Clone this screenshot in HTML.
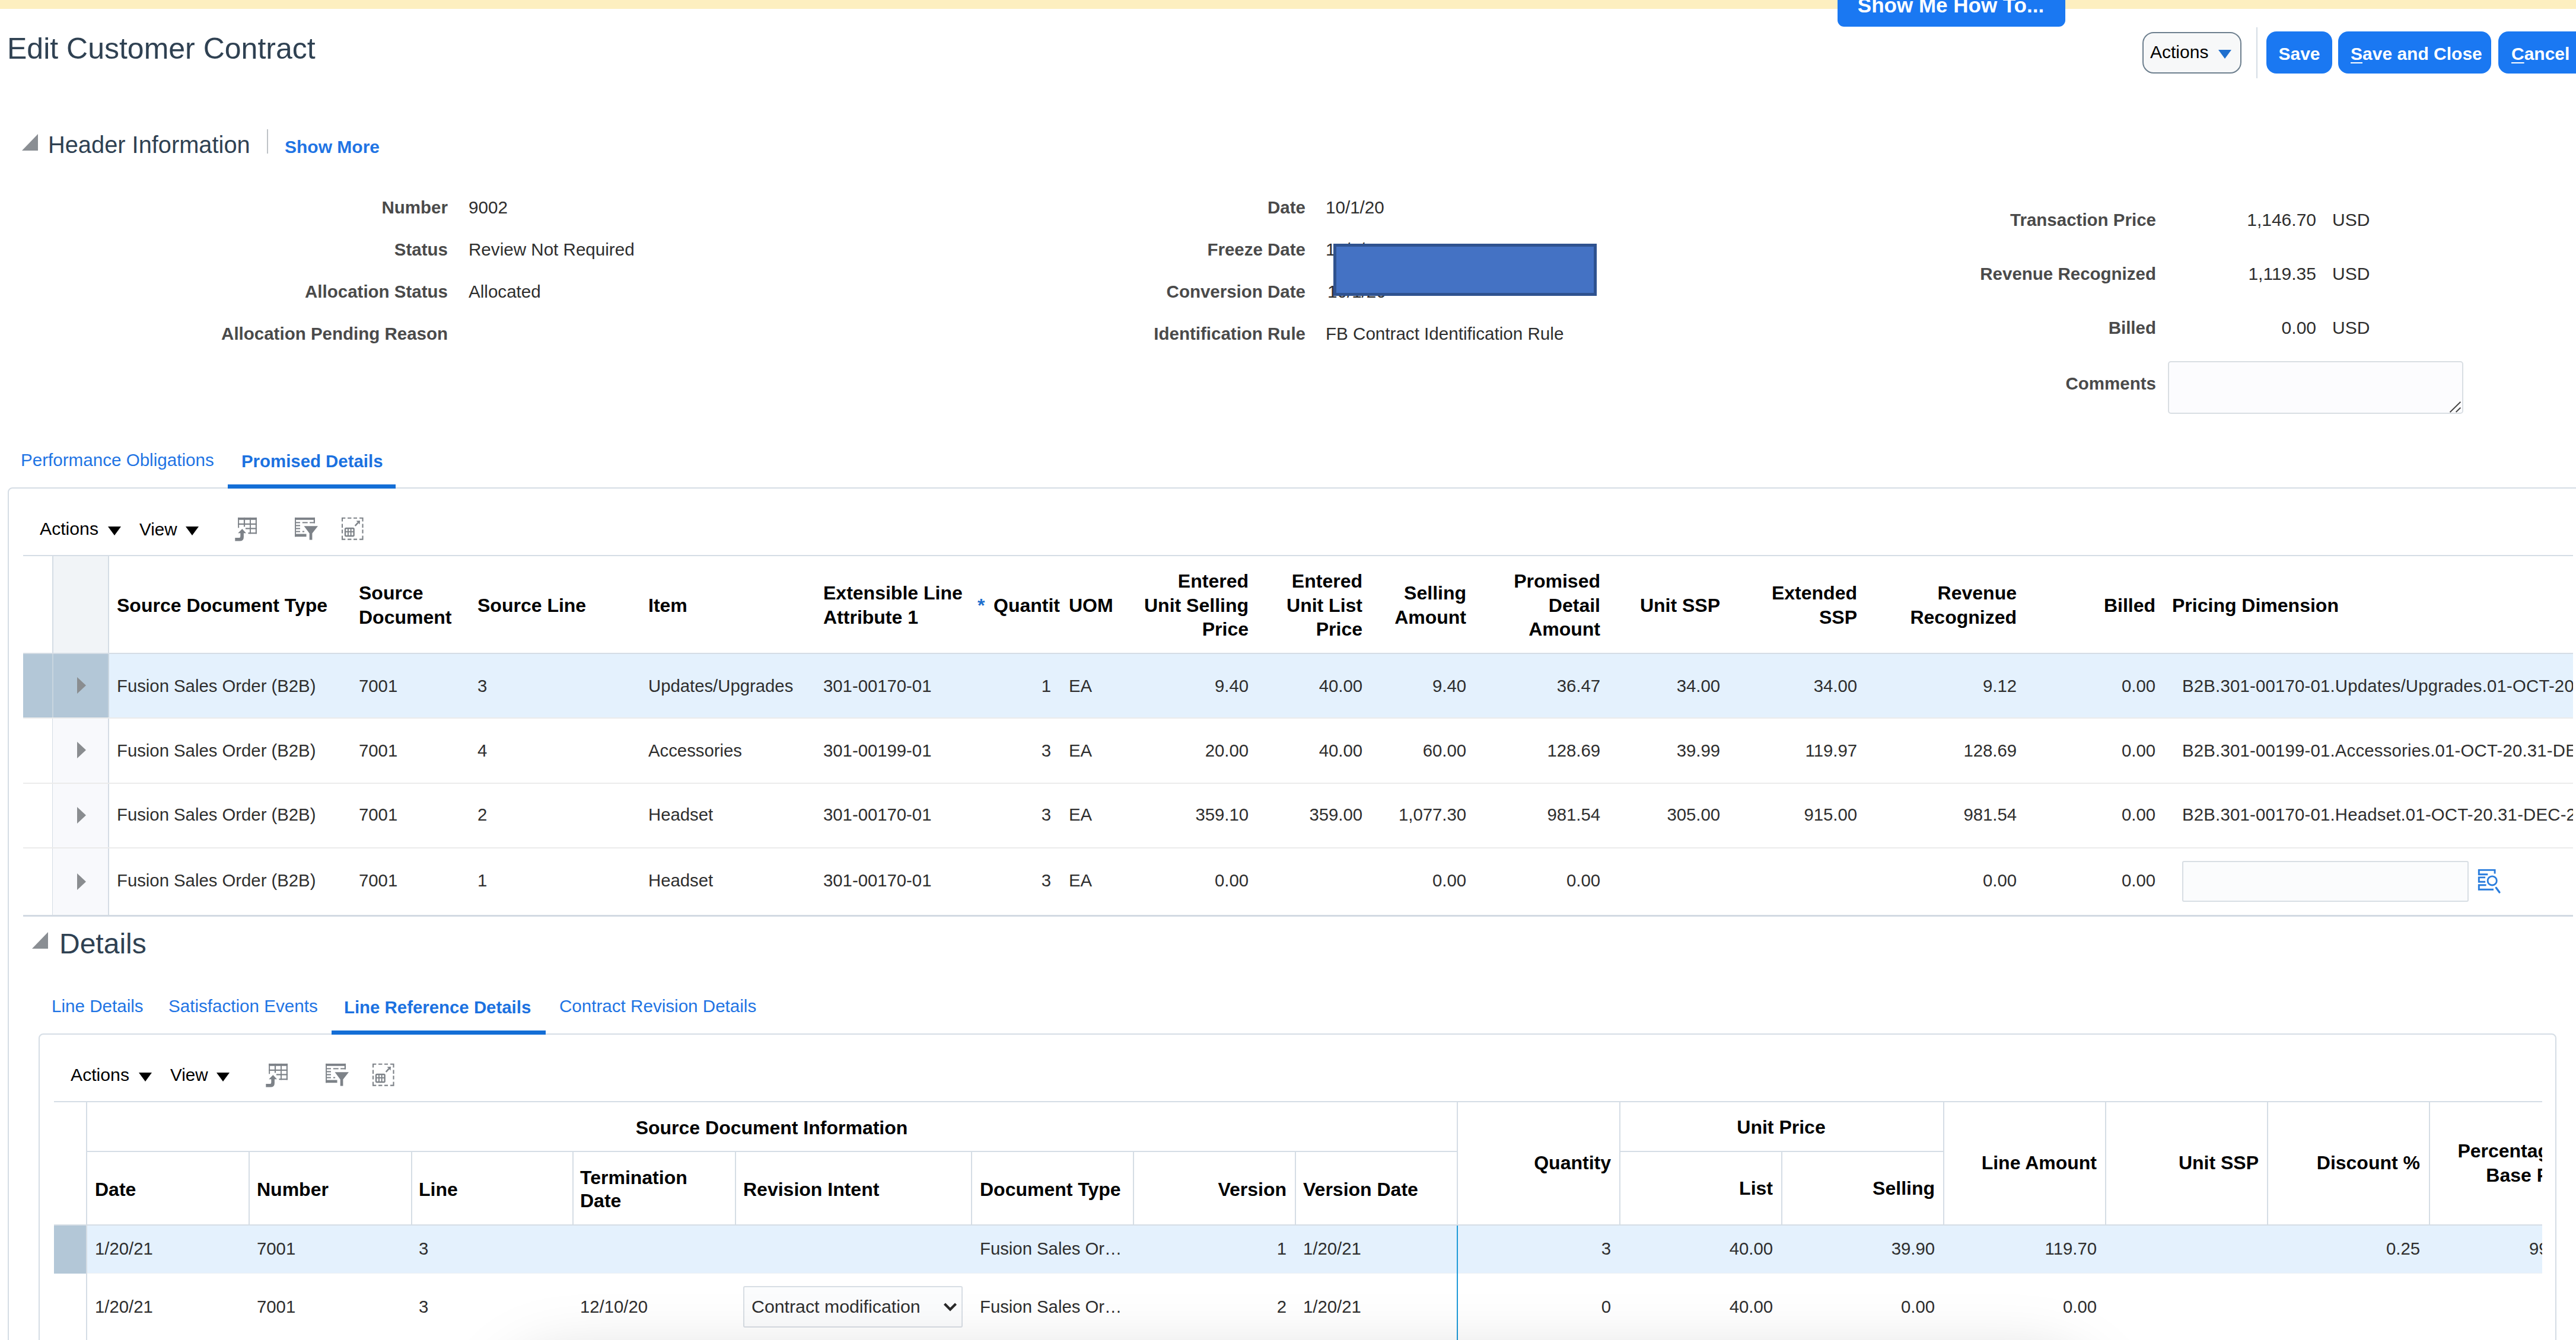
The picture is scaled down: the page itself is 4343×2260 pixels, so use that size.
<!DOCTYPE html>
<html><head><meta charset="utf-8"><title>Edit Customer Contract</title>
<style>
html,body{margin:0;padding:0;width:4343px;height:2260px;overflow:hidden;background:#fff;}
body{font-family:"Liberation Sans",sans-serif;}
#root{position:relative;width:4343px;height:2260px;overflow:hidden;background:#fff;}
.t{position:absolute;white-space:nowrap;}
.b{position:absolute;box-sizing:border-box;}
svg.b{overflow:visible;}
u{text-decoration:underline;text-decoration-thickness:2px;text-underline-offset:4px;}
</style></head><body><div id="root">
<div class="b" style="left:0px;top:0px;width:4343px;height:15px;background:#fdefc0;"></div><div class="b" style="left:3098px;top:-40px;width:384px;height:85px;background:#1a78f2;border-radius:11px;"></div><div class="t" style="top:-8.63px;font-size:35px;font-weight:700;color:#fff;line-height:35px;left:1289px;width:4000px;text-align:center;">Show Me How To...</div><div class="t" style="top:56.66px;font-size:50px;font-weight:400;color:#2f4152;line-height:50px;left:12px;">Edit Customer Contract</div><div class="b" style="left:3612px;top:54px;width:167px;height:70px;border:2px solid #6d7f8e;border-radius:19px;background:#f7f8f9;"></div><div class="t" style="top:73.30px;font-size:30px;font-weight:400;color:#000;line-height:30px;left:3625px;">Actions</div><svg class="b" style="left:3740px;top:84px" width="23" height="16"><path d="M0 0 L22 0 L11 15 Z" fill="#1f6fce"/></svg><div class="b" style="left:3804px;top:46px;width:2px;height:86px;background:#d5dde5;"></div><div class="b" style="left:3821px;top:53px;width:111px;height:71px;background:#1a78f2;border-radius:17px;"></div><div class="t" style="top:76.40px;font-size:30px;font-weight:700;color:#fff;line-height:30px;left:1876.5px;width:4000px;text-align:center;">Save</div><div class="b" style="left:3942px;top:53px;width:258px;height:71px;background:#1a78f2;border-radius:17px;"></div><div class="t" style="top:76.40px;font-size:30px;font-weight:700;color:#fff;line-height:30px;left:3963px;"><u>S</u>ave and Close</div><div class="b" style="left:4212px;top:53px;width:200px;height:71px;background:#1a78f2;border-radius:17px;"></div><div class="t" style="top:76.40px;font-size:30px;font-weight:700;color:#fff;line-height:30px;left:4234px;"><u>C</u>ancel</div><svg class="b" style="left:37px;top:226px" width="28" height="29"><path d="M27 0 L27 28 L0 28 Z" fill="#8a8e93"/></svg><div class="t" style="top:224.80px;font-size:39.8px;font-weight:400;color:#2f4152;line-height:39.8px;left:81px;">Header Information</div><div class="b" style="left:450px;top:218px;width:2px;height:41px;background:#bfc3c7;"></div><div class="t" style="top:233.20px;font-size:30px;font-weight:700;color:#1f74e4;line-height:30px;left:480px;">Show More</div><div class="t" style="top:335.02px;font-size:29.5px;font-weight:700;color:#4a4a4a;line-height:29.5px;left:-3245px;width:4000px;text-align:right;">Number</div><div class="t" style="top:334.94px;font-size:29.6px;font-weight:400;color:#2e2e2e;line-height:29.6px;left:790px;">9002</div><div class="t" style="top:406.02px;font-size:29.5px;font-weight:700;color:#4a4a4a;line-height:29.5px;left:-3245px;width:4000px;text-align:right;">Status</div><div class="t" style="top:405.94px;font-size:29.6px;font-weight:400;color:#2e2e2e;line-height:29.6px;left:790px;">Review Not Required</div><div class="t" style="top:477.02px;font-size:29.5px;font-weight:700;color:#4a4a4a;line-height:29.5px;left:-3245px;width:4000px;text-align:right;">Allocation Status</div><div class="t" style="top:476.94px;font-size:29.6px;font-weight:400;color:#2e2e2e;line-height:29.6px;left:790px;">Allocated</div><div class="t" style="top:548.02px;font-size:29.5px;font-weight:700;color:#4a4a4a;line-height:29.5px;left:-3245px;width:4000px;text-align:right;">Allocation Pending Reason</div><div class="t" style="top:335.02px;font-size:29.5px;font-weight:700;color:#4a4a4a;line-height:29.5px;left:-1799px;width:4000px;text-align:right;">Date</div><div class="t" style="top:334.94px;font-size:29.6px;font-weight:400;color:#2e2e2e;line-height:29.6px;left:2235px;">10/1/20</div><div class="t" style="top:406.02px;font-size:29.5px;font-weight:700;color:#4a4a4a;line-height:29.5px;left:-1799px;width:4000px;text-align:right;">Freeze Date</div><div class="t" style="top:405.94px;font-size:29.6px;font-weight:400;color:#2e2e2e;line-height:29.6px;left:2235px;">10/1/20</div><div class="t" style="top:477.02px;font-size:29.5px;font-weight:700;color:#4a4a4a;line-height:29.5px;left:-1799px;width:4000px;text-align:right;">Conversion Date</div><div class="t" style="top:476.94px;font-size:29.6px;font-weight:400;color:#2e2e2e;line-height:29.6px;left:2238px;">10/1/20</div><div class="t" style="top:548.02px;font-size:29.5px;font-weight:700;color:#4a4a4a;line-height:29.5px;left:-1799px;width:4000px;text-align:right;">Identification Rule</div><div class="t" style="top:547.94px;font-size:29.6px;font-weight:400;color:#2e2e2e;line-height:29.6px;left:2235px;">FB Contract Identification Rule</div><div class="b" style="left:2248px;top:411px;width:444px;height:88px;background:#4472c4;border:5px solid #2f528f;"></div><div class="t" style="top:356.02px;font-size:29.5px;font-weight:700;color:#4a4a4a;line-height:29.5px;left:-365px;width:4000px;text-align:right;">Transaction Price</div><div class="t" style="top:355.60px;font-size:30px;font-weight:400;color:#2e2e2e;line-height:30px;left:-95px;width:4000px;text-align:right;">1,146.70</div><div class="t" style="top:355.60px;font-size:30px;font-weight:400;color:#2e2e2e;line-height:30px;left:3932px;">USD</div><div class="t" style="top:447.02px;font-size:29.5px;font-weight:700;color:#4a4a4a;line-height:29.5px;left:-365px;width:4000px;text-align:right;">Revenue Recognized</div><div class="t" style="top:446.60px;font-size:30px;font-weight:400;color:#2e2e2e;line-height:30px;left:-95px;width:4000px;text-align:right;">1,119.35</div><div class="t" style="top:446.60px;font-size:30px;font-weight:400;color:#2e2e2e;line-height:30px;left:3932px;">USD</div><div class="t" style="top:538.02px;font-size:29.5px;font-weight:700;color:#4a4a4a;line-height:29.5px;left:-365px;width:4000px;text-align:right;">Billed</div><div class="t" style="top:537.60px;font-size:30px;font-weight:400;color:#2e2e2e;line-height:30px;left:-95px;width:4000px;text-align:right;">0.00</div><div class="t" style="top:537.60px;font-size:30px;font-weight:400;color:#2e2e2e;line-height:30px;left:3932px;">USD</div><div class="t" style="top:632.02px;font-size:29.5px;font-weight:700;color:#4a4a4a;line-height:29.5px;left:-365px;width:4000px;text-align:right;">Comments</div><div class="b" style="left:3655px;top:609px;width:498px;height:89px;border:2px solid #d9dee3;border-radius:5px;background:#fcfcfe;"></div><svg class="b" style="left:4125px;top:672px" width="28" height="28"><path d="M5.5 23.3 L23.4 5.8 M15.6 23 L23.4 15.5" stroke="#444" stroke-width="1.9"/></svg><div class="t" style="top:760.64px;font-size:29.6px;font-weight:400;color:#1f74e4;line-height:29.6px;left:35px;">Performance Obligations</div><div class="t" style="top:763.11px;font-size:29.4px;font-weight:700;color:#1b71e0;line-height:29.4px;left:407px;">Promised Details</div><div class="b" style="left:13px;top:822px;width:4400px;height:1600px;border:2px solid #d5dde5;border-radius:8px;"></div><div class="b" style="left:384px;top:817px;width:283px;height:7px;background:#146ed6;"></div><div class="t" style="top:877.23px;font-size:30.2px;font-weight:400;color:#000;line-height:30.2px;left:67px;">Actions</div><svg class="b" style="left:182px;top:888px" width="23" height="16"><path d="M0 0 L22 0 L11 15 Z" fill="#000"/></svg><div class="t" style="top:877.74px;font-size:29.6px;font-weight:400;color:#000;line-height:29.6px;left:235px;">View</div><svg class="b" style="left:313px;top:888px" width="23" height="16"><path d="M0 0 L22 0 L11 15 Z" fill="#000"/></svg><svg class="b" style="left:390px;top:866px" width="50" height="50" viewBox="0 0 50 50">
<rect x="11.2" y="6.9" width="31.7" height="3.9" fill="#7d8288"/>
<rect x="11.2" y="6.9" width="1.9" height="17.4" fill="#7d8288"/>
<rect x="20.9" y="6.9" width="2.2" height="15.5" fill="#7d8288"/>
<rect x="31" y="6.9" width="1.9" height="27.4" fill="#7d8288"/>
<rect x="40.8" y="6.9" width="2.1" height="27.4" fill="#7d8288"/>
<rect x="11.2" y="16.8" width="31.7" height="2.2" fill="#7d8288"/>
<rect x="23.9" y="24.3" width="19" height="2.2" fill="#7d8288"/>
<rect x="28.4" y="32.1" width="14.5" height="2.2" fill="#7d8288"/>
<path d="M18.3 26.1 L25 33.2 L20.9 33.2 L20.9 40 Q20.9 46.6 14 46.6 L6.3 46.6 L6.3 41 L13.5 41 Q15.3 41 15.3 38.5 L15.3 33.2 L11.2 33.2 Z" fill="#7d8288"/>
</svg><svg class="b" style="left:490px;top:866px" width="50" height="50" viewBox="0 0 50 50">
<rect x="7.1" y="6.9" width="1.9" height="32.3" fill="#7d8288"/>
<rect x="7.1" y="6.9" width="33.9" height="3.9" fill="#7d8288"/>
<rect x="38.8" y="6.9" width="2.2" height="9.5" fill="#7d8288"/>
<rect x="9" y="14.4" width="7" height="2" fill="#7d8288"/>
<rect x="19.8" y="14.4" width="8.9" height="2" fill="#7d8288"/>
<rect x="32.1" y="14.4" width="8.9" height="2" fill="#7d8288"/>
<rect x="9" y="19.4" width="7" height="2.1" fill="#7d8288"/>
<rect x="9" y="24.4" width="7" height="2.1" fill="#7d8288"/>
<rect x="9" y="29.5" width="7" height="2" fill="#7d8288"/>
<rect x="19.8" y="29.5" width="3.3" height="2" fill="#7d8288"/>
<rect x="7.1" y="34.5" width="19.4" height="4.7" fill="#7d8288"/>
<path d="M22.5 21.3 L46 21.3 L36.4 33.4 L36.4 44.4 L31.7 44.4 L31.7 33.4 Z" fill="#7d8288"/>
</svg><svg class="b" style="left:570px;top:866px" width="50" height="50" viewBox="0 0 50 50">
<path d="M7 13.4 V7.8 H12.3 M16 7.8 H22.4 M26 7.8 H32 M36 7.8 H41.5 V13.4 M41.5 17.5 V23.9 M41.5 27.2 V33.6 M41.5 37.5 V43.6 H36 M32 43.6 H26 M22.4 43.6 H16 M12.3 43.6 H7 V37.5 M7 33.6 V27.2 M7 23.9 V17.5" stroke="#7d8288" stroke-width="2.1" fill="none"/>
<rect x="12" y="25" width="14.6" height="13" rx="1.5" fill="none" stroke="#7d8288" stroke-width="2.4"/>
<path d="M16.9 25 V38 M21.6 25 V38 M12 30.8 H26.6" stroke="#7d8288" stroke-width="2"/>
<path d="M28.7 20.9 L33.5 15.6" stroke="#7d8288" stroke-width="2.4"/>
<path d="M37 11.9 L30.6 12.4 L36.5 18.6 Z" fill="#7d8288"/>
</svg><div class="b" style="left:39px;top:936px;width:4299px;height:2px;background:#d5dde5;"></div><div class="b" style="left:89px;top:938px;width:94px;height:163px;background:#f1f4f7;"></div><div class="b" style="left:88px;top:938px;width:2px;height:607px;background:#d5dde5;"></div><div class="b" style="left:182px;top:938px;width:2px;height:607px;background:#d5dde5;"></div><div class="b" style="left:39px;top:1102px;width:4299px;height:108px;background:#e4f1fd;"></div><div class="b" style="left:39px;top:1102px;width:144px;height:108px;background:#b3c7d7;"></div><div class="b" style="left:88px;top:1102px;width:2px;height:108px;background:#c8d5df;"></div><div class="b" style="left:182px;top:1102px;width:2px;height:108px;background:#c9d6e0;"></div><div class="b" style="left:89px;top:1211px;width:93px;height:109px;background:#f8f9fc;"></div><div class="b" style="left:89px;top:1321px;width:93px;height:108px;background:#f8f9fc;"></div><div class="b" style="left:89px;top:1430px;width:93px;height:114px;background:#f8f9fc;"></div><div class="b" style="left:39px;top:1101px;width:4299px;height:2px;background:#ebebeb;"></div><div class="b" style="left:39px;top:1210px;width:4299px;height:2px;background:#ebebeb;"></div><div class="b" style="left:39px;top:1320px;width:4299px;height:2px;background:#ebebeb;"></div><div class="b" style="left:39px;top:1429px;width:4299px;height:2px;background:#ebebeb;"></div><div class="b" style="left:39px;top:1544px;width:4299px;height:2px;background:#ebebeb;"></div><div class="b" style="left:39px;top:1101px;width:4299px;height:2px;background:#d5dde5;"></div><div class="b" style="left:39px;top:1543px;width:4299px;height:3px;background:#d2dae2;"></div><svg class="b" style="left:130px;top:1141.5px" width="16" height="28"><path d="M0 0 L15 14 L0 28 Z" fill="#8a8d90"/></svg><svg class="b" style="left:130px;top:1251.0px" width="16" height="28"><path d="M0 0 L15 14 L0 28 Z" fill="#8a8d90"/></svg><svg class="b" style="left:130px;top:1360.5px" width="16" height="28"><path d="M0 0 L15 14 L0 28 Z" fill="#8a8d90"/></svg><svg class="b" style="left:130px;top:1472.5px" width="16" height="28"><path d="M0 0 L15 14 L0 28 Z" fill="#8a8d90"/></svg><div class="t" style="top:1004.91px;font-size:32px;font-weight:700;color:#000;line-height:32px;left:197px;">Source Document Type</div><div class="t" style="top:984.41px;font-size:32px;font-weight:700;color:#000;line-height:32px;left:605px;">Source</div><div class="t" style="top:1024.91px;font-size:32px;font-weight:700;color:#000;line-height:32px;left:605px;">Document</div><div class="t" style="top:1004.91px;font-size:32px;font-weight:700;color:#000;line-height:32px;left:805px;">Source Line</div><div class="t" style="top:1004.91px;font-size:32px;font-weight:700;color:#000;line-height:32px;left:1093px;">Item</div><div class="t" style="top:984.41px;font-size:32px;font-weight:700;color:#000;line-height:32px;left:1388px;">Extensible Line</div><div class="t" style="top:1024.91px;font-size:32px;font-weight:700;color:#000;line-height:32px;left:1388px;">Attribute 1</div><div class="t" style="top:1004.91px;font-size:32px;font-weight:700;color:#1f6fce;line-height:32px;left:1648px;">*</div><div class="t" style="top:1004.91px;font-size:32px;font-weight:700;color:#000;line-height:32px;left:1675px;">Quantit</div><div class="t" style="top:1004.91px;font-size:32px;font-weight:700;color:#000;line-height:32px;left:1802px;">UOM</div><div class="t" style="top:964.31px;font-size:32px;font-weight:700;color:#000;line-height:32px;left:-1895px;width:4000px;text-align:right;">Entered</div><div class="t" style="top:1004.51px;font-size:32px;font-weight:700;color:#000;line-height:32px;left:-1895px;width:4000px;text-align:right;">Unit Selling</div><div class="t" style="top:1044.71px;font-size:32px;font-weight:700;color:#000;line-height:32px;left:-1895px;width:4000px;text-align:right;">Price</div><div class="t" style="top:964.31px;font-size:32px;font-weight:700;color:#000;line-height:32px;left:-1703px;width:4000px;text-align:right;">Entered</div><div class="t" style="top:1004.51px;font-size:32px;font-weight:700;color:#000;line-height:32px;left:-1703px;width:4000px;text-align:right;">Unit List</div><div class="t" style="top:1044.71px;font-size:32px;font-weight:700;color:#000;line-height:32px;left:-1703px;width:4000px;text-align:right;">Price</div><div class="t" style="top:984.41px;font-size:32px;font-weight:700;color:#000;line-height:32px;left:-1528px;width:4000px;text-align:right;">Selling</div><div class="t" style="top:1024.91px;font-size:32px;font-weight:700;color:#000;line-height:32px;left:-1528px;width:4000px;text-align:right;">Amount</div><div class="t" style="top:964.31px;font-size:32px;font-weight:700;color:#000;line-height:32px;left:-1302px;width:4000px;text-align:right;">Promised</div><div class="t" style="top:1004.51px;font-size:32px;font-weight:700;color:#000;line-height:32px;left:-1302px;width:4000px;text-align:right;">Detail</div><div class="t" style="top:1044.71px;font-size:32px;font-weight:700;color:#000;line-height:32px;left:-1302px;width:4000px;text-align:right;">Amount</div><div class="t" style="top:1004.91px;font-size:32px;font-weight:700;color:#000;line-height:32px;left:-1100px;width:4000px;text-align:right;">Unit SSP</div><div class="t" style="top:984.41px;font-size:32px;font-weight:700;color:#000;line-height:32px;left:-869px;width:4000px;text-align:right;">Extended</div><div class="t" style="top:1024.91px;font-size:32px;font-weight:700;color:#000;line-height:32px;left:-869px;width:4000px;text-align:right;">SSP</div><div class="t" style="top:984.41px;font-size:32px;font-weight:700;color:#000;line-height:32px;left:-600px;width:4000px;text-align:right;">Revenue</div><div class="t" style="top:1024.91px;font-size:32px;font-weight:700;color:#000;line-height:32px;left:-600px;width:4000px;text-align:right;">Recognized</div><div class="t" style="top:1004.91px;font-size:32px;font-weight:700;color:#000;line-height:32px;left:-366px;width:4000px;text-align:right;">Billed</div><div class="t" style="top:1004.91px;font-size:32px;font-weight:700;color:#000;line-height:32px;left:3662px;">Pricing Dimension</div><div class="b" style="left:0;top:0;width:4338px;height:2260px;overflow:hidden;"><div class="t" style="top:1141.99px;font-size:29.3px;font-weight:400;color:#2e2e2e;line-height:29.3px;left:197px;">Fusion Sales Order (B2B)</div><div class="t" style="top:1141.99px;font-size:29.3px;font-weight:400;color:#2e2e2e;line-height:29.3px;left:605px;">7001</div><div class="t" style="top:1141.99px;font-size:29.3px;font-weight:400;color:#2e2e2e;line-height:29.3px;left:805px;">3</div><div class="t" style="top:1141.99px;font-size:29.3px;font-weight:400;color:#2e2e2e;line-height:29.3px;left:1093px;">Updates/Upgrades</div><div class="t" style="top:1141.99px;font-size:29.3px;font-weight:400;color:#2e2e2e;line-height:29.3px;left:1388px;">301-00170-01</div><div class="t" style="top:1141.99px;font-size:29.3px;font-weight:400;color:#2e2e2e;line-height:29.3px;left:-2228px;width:4000px;text-align:right;">1</div><div class="t" style="top:1141.99px;font-size:29.3px;font-weight:400;color:#2e2e2e;line-height:29.3px;left:1802px;">EA</div><div class="t" style="top:1141.99px;font-size:29.3px;font-weight:400;color:#2e2e2e;line-height:29.3px;left:-1895px;width:4000px;text-align:right;">9.40</div><div class="t" style="top:1141.99px;font-size:29.3px;font-weight:400;color:#2e2e2e;line-height:29.3px;left:-1703px;width:4000px;text-align:right;">40.00</div><div class="t" style="top:1141.99px;font-size:29.3px;font-weight:400;color:#2e2e2e;line-height:29.3px;left:-1528px;width:4000px;text-align:right;">9.40</div><div class="t" style="top:1141.99px;font-size:29.3px;font-weight:400;color:#2e2e2e;line-height:29.3px;left:-1302px;width:4000px;text-align:right;">36.47</div><div class="t" style="top:1141.99px;font-size:29.3px;font-weight:400;color:#2e2e2e;line-height:29.3px;left:-1100px;width:4000px;text-align:right;">34.00</div><div class="t" style="top:1141.99px;font-size:29.3px;font-weight:400;color:#2e2e2e;line-height:29.3px;left:-869px;width:4000px;text-align:right;">34.00</div><div class="t" style="top:1141.99px;font-size:29.3px;font-weight:400;color:#2e2e2e;line-height:29.3px;left:-600px;width:4000px;text-align:right;">9.12</div><div class="t" style="top:1141.99px;font-size:29.3px;font-weight:400;color:#2e2e2e;line-height:29.3px;left:-366px;width:4000px;text-align:right;">0.00</div><div class="t" style="top:1141.99px;font-size:29.3px;font-weight:400;color:#2e2e2e;line-height:29.3px;left:3679px;letter-spacing:0.22px;">B2B.301-00170-01.Updates/Upgrades.01-OCT-20.31-DEC-20</div><div class="t" style="top:1250.59px;font-size:29.3px;font-weight:400;color:#2e2e2e;line-height:29.3px;left:197px;">Fusion Sales Order (B2B)</div><div class="t" style="top:1250.59px;font-size:29.3px;font-weight:400;color:#2e2e2e;line-height:29.3px;left:605px;">7001</div><div class="t" style="top:1250.59px;font-size:29.3px;font-weight:400;color:#2e2e2e;line-height:29.3px;left:805px;">4</div><div class="t" style="top:1250.59px;font-size:29.3px;font-weight:400;color:#2e2e2e;line-height:29.3px;left:1093px;">Accessories</div><div class="t" style="top:1250.59px;font-size:29.3px;font-weight:400;color:#2e2e2e;line-height:29.3px;left:1388px;">301-00199-01</div><div class="t" style="top:1250.59px;font-size:29.3px;font-weight:400;color:#2e2e2e;line-height:29.3px;left:-2228px;width:4000px;text-align:right;">3</div><div class="t" style="top:1250.59px;font-size:29.3px;font-weight:400;color:#2e2e2e;line-height:29.3px;left:1802px;">EA</div><div class="t" style="top:1250.59px;font-size:29.3px;font-weight:400;color:#2e2e2e;line-height:29.3px;left:-1895px;width:4000px;text-align:right;">20.00</div><div class="t" style="top:1250.59px;font-size:29.3px;font-weight:400;color:#2e2e2e;line-height:29.3px;left:-1703px;width:4000px;text-align:right;">40.00</div><div class="t" style="top:1250.59px;font-size:29.3px;font-weight:400;color:#2e2e2e;line-height:29.3px;left:-1528px;width:4000px;text-align:right;">60.00</div><div class="t" style="top:1250.59px;font-size:29.3px;font-weight:400;color:#2e2e2e;line-height:29.3px;left:-1302px;width:4000px;text-align:right;">128.69</div><div class="t" style="top:1250.59px;font-size:29.3px;font-weight:400;color:#2e2e2e;line-height:29.3px;left:-1100px;width:4000px;text-align:right;">39.99</div><div class="t" style="top:1250.59px;font-size:29.3px;font-weight:400;color:#2e2e2e;line-height:29.3px;left:-869px;width:4000px;text-align:right;">119.97</div><div class="t" style="top:1250.59px;font-size:29.3px;font-weight:400;color:#2e2e2e;line-height:29.3px;left:-600px;width:4000px;text-align:right;">128.69</div><div class="t" style="top:1250.59px;font-size:29.3px;font-weight:400;color:#2e2e2e;line-height:29.3px;left:-366px;width:4000px;text-align:right;">0.00</div><div class="t" style="top:1250.59px;font-size:29.3px;font-weight:400;color:#2e2e2e;line-height:29.3px;left:3679px;letter-spacing:0.22px;">B2B.301-00199-01.Accessories.01-OCT-20.31-DEC-20</div><div class="t" style="top:1359.19px;font-size:29.3px;font-weight:400;color:#2e2e2e;line-height:29.3px;left:197px;">Fusion Sales Order (B2B)</div><div class="t" style="top:1359.19px;font-size:29.3px;font-weight:400;color:#2e2e2e;line-height:29.3px;left:605px;">7001</div><div class="t" style="top:1359.19px;font-size:29.3px;font-weight:400;color:#2e2e2e;line-height:29.3px;left:805px;">2</div><div class="t" style="top:1359.19px;font-size:29.3px;font-weight:400;color:#2e2e2e;line-height:29.3px;left:1093px;">Headset</div><div class="t" style="top:1359.19px;font-size:29.3px;font-weight:400;color:#2e2e2e;line-height:29.3px;left:1388px;">301-00170-01</div><div class="t" style="top:1359.19px;font-size:29.3px;font-weight:400;color:#2e2e2e;line-height:29.3px;left:-2228px;width:4000px;text-align:right;">3</div><div class="t" style="top:1359.19px;font-size:29.3px;font-weight:400;color:#2e2e2e;line-height:29.3px;left:1802px;">EA</div><div class="t" style="top:1359.19px;font-size:29.3px;font-weight:400;color:#2e2e2e;line-height:29.3px;left:-1895px;width:4000px;text-align:right;">359.10</div><div class="t" style="top:1359.19px;font-size:29.3px;font-weight:400;color:#2e2e2e;line-height:29.3px;left:-1703px;width:4000px;text-align:right;">359.00</div><div class="t" style="top:1359.19px;font-size:29.3px;font-weight:400;color:#2e2e2e;line-height:29.3px;left:-1528px;width:4000px;text-align:right;">1,077.30</div><div class="t" style="top:1359.19px;font-size:29.3px;font-weight:400;color:#2e2e2e;line-height:29.3px;left:-1302px;width:4000px;text-align:right;">981.54</div><div class="t" style="top:1359.19px;font-size:29.3px;font-weight:400;color:#2e2e2e;line-height:29.3px;left:-1100px;width:4000px;text-align:right;">305.00</div><div class="t" style="top:1359.19px;font-size:29.3px;font-weight:400;color:#2e2e2e;line-height:29.3px;left:-869px;width:4000px;text-align:right;">915.00</div><div class="t" style="top:1359.19px;font-size:29.3px;font-weight:400;color:#2e2e2e;line-height:29.3px;left:-600px;width:4000px;text-align:right;">981.54</div><div class="t" style="top:1359.19px;font-size:29.3px;font-weight:400;color:#2e2e2e;line-height:29.3px;left:-366px;width:4000px;text-align:right;">0.00</div><div class="t" style="top:1359.19px;font-size:29.3px;font-weight:400;color:#2e2e2e;line-height:29.3px;left:3679px;letter-spacing:0.22px;">B2B.301-00170-01.Headset.01-OCT-20.31-DEC-20</div><div class="t" style="top:1470.19px;font-size:29.3px;font-weight:400;color:#2e2e2e;line-height:29.3px;left:197px;">Fusion Sales Order (B2B)</div><div class="t" style="top:1470.19px;font-size:29.3px;font-weight:400;color:#2e2e2e;line-height:29.3px;left:605px;">7001</div><div class="t" style="top:1470.19px;font-size:29.3px;font-weight:400;color:#2e2e2e;line-height:29.3px;left:805px;">1</div><div class="t" style="top:1470.19px;font-size:29.3px;font-weight:400;color:#2e2e2e;line-height:29.3px;left:1093px;">Headset</div><div class="t" style="top:1470.19px;font-size:29.3px;font-weight:400;color:#2e2e2e;line-height:29.3px;left:1388px;">301-00170-01</div><div class="t" style="top:1470.19px;font-size:29.3px;font-weight:400;color:#2e2e2e;line-height:29.3px;left:-2228px;width:4000px;text-align:right;">3</div><div class="t" style="top:1470.19px;font-size:29.3px;font-weight:400;color:#2e2e2e;line-height:29.3px;left:1802px;">EA</div><div class="t" style="top:1470.19px;font-size:29.3px;font-weight:400;color:#2e2e2e;line-height:29.3px;left:-1895px;width:4000px;text-align:right;">0.00</div><div class="t" style="top:1470.19px;font-size:29.3px;font-weight:400;color:#2e2e2e;line-height:29.3px;left:-1528px;width:4000px;text-align:right;">0.00</div><div class="t" style="top:1470.19px;font-size:29.3px;font-weight:400;color:#2e2e2e;line-height:29.3px;left:-1302px;width:4000px;text-align:right;">0.00</div><div class="t" style="top:1470.19px;font-size:29.3px;font-weight:400;color:#2e2e2e;line-height:29.3px;left:-600px;width:4000px;text-align:right;">0.00</div><div class="t" style="top:1470.19px;font-size:29.3px;font-weight:400;color:#2e2e2e;line-height:29.3px;left:-366px;width:4000px;text-align:right;">0.00</div></div><div class="b" style="left:3679px;top:1452px;width:483px;height:69px;border:2px solid #d8dee4;border-radius:3px;background:#fbfcfd;"></div><svg class="b" style="left:4170px;top:1460px" width="50" height="50" viewBox="0 0 50 50">
<path d="M24.3 14.8 H9.3 V7.4 H36.1 V13.4" stroke="#2a7ddd" stroke-width="2.9" fill="none"/>
<path d="M20.1 19.9 H9.3 V27.2 H20.1" stroke="#2a7ddd" stroke-width="2.9" fill="none"/>
<path d="M21.6 32.7 H9.3 V40.2 H34" stroke="#2a7ddd" stroke-width="2.9" fill="none"/>
<circle cx="31.7" cy="25.4" r="7.6" stroke="#2a7ddd" stroke-width="2.8" fill="none"/>
<path d="M38.3 37.2 L44 45" stroke="#2a7ddd" stroke-width="3.2" stroke-linecap="round"/>
</svg><svg class="b" style="left:54px;top:1572px" width="28" height="29"><path d="M27 0 L27 28 L0 28 Z" fill="#8a8e93"/></svg><div class="t" style="top:1568.16px;font-size:48px;font-weight:400;color:#2f4152;line-height:48px;left:100px;">Details</div><div class="t" style="top:1681.54px;font-size:29.6px;font-weight:400;color:#1f74e4;line-height:29.6px;left:87px;">Line Details</div><div class="t" style="top:1681.54px;font-size:29.6px;font-weight:400;color:#1f74e4;line-height:29.6px;left:284px;">Satisfaction Events</div><div class="t" style="top:1683.61px;font-size:29.4px;font-weight:700;color:#1b71e0;line-height:29.4px;left:580px;">Line Reference Details</div><div class="t" style="top:1681.54px;font-size:29.6px;font-weight:400;color:#1f74e4;line-height:29.6px;left:943px;">Contract Revision Details</div><div class="b" style="left:65px;top:1743px;width:4245px;height:700px;border:2px solid #d5dde5;border-radius:8px;"></div><div class="b" style="left:559px;top:1738px;width:361px;height:7px;background:#146ed6;"></div><div class="t" style="top:1797.73px;font-size:30.2px;font-weight:400;color:#000;line-height:30.2px;left:119px;">Actions</div><svg class="b" style="left:234px;top:1808.5px" width="23" height="16"><path d="M0 0 L22 0 L11 15 Z" fill="#000"/></svg><div class="t" style="top:1798.24px;font-size:29.6px;font-weight:400;color:#000;line-height:29.6px;left:287px;">View</div><svg class="b" style="left:365px;top:1808.5px" width="23" height="16"><path d="M0 0 L22 0 L11 15 Z" fill="#000"/></svg><svg class="b" style="left:442px;top:1786.5px" width="50" height="50" viewBox="0 0 50 50">
<rect x="11.2" y="6.9" width="31.7" height="3.9" fill="#7d8288"/>
<rect x="11.2" y="6.9" width="1.9" height="17.4" fill="#7d8288"/>
<rect x="20.9" y="6.9" width="2.2" height="15.5" fill="#7d8288"/>
<rect x="31" y="6.9" width="1.9" height="27.4" fill="#7d8288"/>
<rect x="40.8" y="6.9" width="2.1" height="27.4" fill="#7d8288"/>
<rect x="11.2" y="16.8" width="31.7" height="2.2" fill="#7d8288"/>
<rect x="23.9" y="24.3" width="19" height="2.2" fill="#7d8288"/>
<rect x="28.4" y="32.1" width="14.5" height="2.2" fill="#7d8288"/>
<path d="M18.3 26.1 L25 33.2 L20.9 33.2 L20.9 40 Q20.9 46.6 14 46.6 L6.3 46.6 L6.3 41 L13.5 41 Q15.3 41 15.3 38.5 L15.3 33.2 L11.2 33.2 Z" fill="#7d8288"/>
</svg><svg class="b" style="left:542px;top:1786.5px" width="50" height="50" viewBox="0 0 50 50">
<rect x="7.1" y="6.9" width="1.9" height="32.3" fill="#7d8288"/>
<rect x="7.1" y="6.9" width="33.9" height="3.9" fill="#7d8288"/>
<rect x="38.8" y="6.9" width="2.2" height="9.5" fill="#7d8288"/>
<rect x="9" y="14.4" width="7" height="2" fill="#7d8288"/>
<rect x="19.8" y="14.4" width="8.9" height="2" fill="#7d8288"/>
<rect x="32.1" y="14.4" width="8.9" height="2" fill="#7d8288"/>
<rect x="9" y="19.4" width="7" height="2.1" fill="#7d8288"/>
<rect x="9" y="24.4" width="7" height="2.1" fill="#7d8288"/>
<rect x="9" y="29.5" width="7" height="2" fill="#7d8288"/>
<rect x="19.8" y="29.5" width="3.3" height="2" fill="#7d8288"/>
<rect x="7.1" y="34.5" width="19.4" height="4.7" fill="#7d8288"/>
<path d="M22.5 21.3 L46 21.3 L36.4 33.4 L36.4 44.4 L31.7 44.4 L31.7 33.4 Z" fill="#7d8288"/>
</svg><svg class="b" style="left:622px;top:1786.5px" width="50" height="50" viewBox="0 0 50 50">
<path d="M7 13.4 V7.8 H12.3 M16 7.8 H22.4 M26 7.8 H32 M36 7.8 H41.5 V13.4 M41.5 17.5 V23.9 M41.5 27.2 V33.6 M41.5 37.5 V43.6 H36 M32 43.6 H26 M22.4 43.6 H16 M12.3 43.6 H7 V37.5 M7 33.6 V27.2 M7 23.9 V17.5" stroke="#7d8288" stroke-width="2.1" fill="none"/>
<rect x="12" y="25" width="14.6" height="13" rx="1.5" fill="none" stroke="#7d8288" stroke-width="2.4"/>
<path d="M16.9 25 V38 M21.6 25 V38 M12 30.8 H26.6" stroke="#7d8288" stroke-width="2"/>
<path d="M28.7 20.9 L33.5 15.6" stroke="#7d8288" stroke-width="2.4"/>
<path d="M37 11.9 L30.6 12.4 L36.5 18.6 Z" fill="#7d8288"/>
</svg><div class="b" style="left:91px;top:1857px;width:4195px;height:2px;background:#d5dde5;"></div><div class="b" style="left:146px;top:1941px;width:2310px;height:2px;background:#d5dde5;"></div><div class="b" style="left:2730px;top:1941px;width:546px;height:2px;background:#d5dde5;"></div><div class="b" style="left:91px;top:2065px;width:4195px;height:2px;background:#d5dde5;"></div><div class="b" style="left:91px;top:2067px;width:4195px;height:81px;background:#e4f1fd;"></div><div class="b" style="left:91px;top:2067px;width:55px;height:81px;background:#b3c7d7;"></div><div class="b" style="left:146px;top:2147px;width:4140px;height:1px;background:#edf1f5;"></div><div class="b" style="left:145px;top:1859px;width:2px;height:401px;background:#d5dde5;"></div><div class="b" style="left:419px;top:1943px;width:2px;height:122px;background:#d5dde5;"></div><div class="b" style="left:693px;top:1943px;width:2px;height:122px;background:#d5dde5;"></div><div class="b" style="left:965px;top:1943px;width:2px;height:122px;background:#d5dde5;"></div><div class="b" style="left:1239px;top:1943px;width:2px;height:122px;background:#d5dde5;"></div><div class="b" style="left:1637px;top:1943px;width:2px;height:122px;background:#d5dde5;"></div><div class="b" style="left:1910px;top:1943px;width:2px;height:122px;background:#d5dde5;"></div><div class="b" style="left:2183px;top:1943px;width:2px;height:122px;background:#d5dde5;"></div><div class="b" style="left:2456px;top:1859px;width:2px;height:206px;background:#d5dde5;"></div><div class="b" style="left:2456px;top:2067px;width:2px;height:193px;background:#1f9ad8;"></div><div class="b" style="left:2730px;top:1859px;width:2px;height:206px;background:#d5dde5;"></div><div class="b" style="left:3276px;top:1859px;width:2px;height:206px;background:#d5dde5;"></div><div class="b" style="left:3549px;top:1859px;width:2px;height:206px;background:#d5dde5;"></div><div class="b" style="left:3822px;top:1859px;width:2px;height:206px;background:#d5dde5;"></div><div class="b" style="left:4095px;top:1859px;width:2px;height:206px;background:#d5dde5;"></div><div class="b" style="left:3003px;top:1943px;width:2px;height:122px;background:#d5dde5;"></div><div class="b" style="left:0;top:0;width:4286px;height:2260px;overflow:hidden;"><div class="t" style="top:1885.91px;font-size:32px;font-weight:700;color:#000;line-height:32px;left:-699px;width:4000px;text-align:center;">Source Document Information</div><div class="t" style="top:1884.91px;font-size:32px;font-weight:700;color:#000;line-height:32px;left:1003px;width:4000px;text-align:center;">Unit Price</div><div class="t" style="top:1989.91px;font-size:32px;font-weight:700;color:#000;line-height:32px;left:160px;">Date</div><div class="t" style="top:1989.91px;font-size:32px;font-weight:700;color:#000;line-height:32px;left:433px;">Number</div><div class="t" style="top:1989.91px;font-size:32px;font-weight:700;color:#000;line-height:32px;left:706px;">Line</div><div class="t" style="top:1969.91px;font-size:32px;font-weight:700;color:#000;line-height:32px;left:978px;">Termination</div><div class="t" style="top:2009.41px;font-size:32px;font-weight:700;color:#000;line-height:32px;left:978px;">Date</div><div class="t" style="top:1989.91px;font-size:32px;font-weight:700;color:#000;line-height:32px;left:1253px;">Revision Intent</div><div class="t" style="top:1989.91px;font-size:32px;font-weight:700;color:#000;line-height:32px;left:1652px;">Document Type</div><div class="t" style="top:1989.91px;font-size:32px;font-weight:700;color:#000;line-height:32px;left:-1831px;width:4000px;text-align:right;">Version</div><div class="t" style="top:1989.91px;font-size:32px;font-weight:700;color:#000;line-height:32px;left:2197px;">Version Date</div><div class="t" style="top:1944.91px;font-size:32px;font-weight:700;color:#000;line-height:32px;left:-1284px;width:4000px;text-align:right;">Quantity</div><div class="t" style="top:1988.41px;font-size:32px;font-weight:700;color:#000;line-height:32px;left:-1011px;width:4000px;text-align:right;">List</div><div class="t" style="top:1988.41px;font-size:32px;font-weight:700;color:#000;line-height:32px;left:-738px;width:4000px;text-align:right;">Selling</div><div class="t" style="top:1944.91px;font-size:32px;font-weight:700;color:#000;line-height:32px;left:-465px;width:4000px;text-align:right;">Line Amount</div><div class="t" style="top:1944.91px;font-size:32px;font-weight:700;color:#000;line-height:32px;left:-192px;width:4000px;text-align:right;">Unit SSP</div><div class="t" style="top:1944.91px;font-size:32px;font-weight:700;color:#000;line-height:32px;left:80px;width:4000px;text-align:right;">Discount %</div><div class="t" style="top:1925.31px;font-size:32px;font-weight:700;color:#000;line-height:32px;left:355px;width:4000px;text-align:right;">Percentage of</div><div class="t" style="top:1965.61px;font-size:32px;font-weight:700;color:#000;line-height:32px;left:355px;width:4000px;text-align:right;">Base Price</div><div class="t" style="top:2090.69px;font-size:29.3px;font-weight:400;color:#2e2e2e;line-height:29.3px;left:160px;">1/20/21</div><div class="t" style="top:2090.69px;font-size:29.3px;font-weight:400;color:#2e2e2e;line-height:29.3px;left:433px;">7001</div><div class="t" style="top:2090.69px;font-size:29.3px;font-weight:400;color:#2e2e2e;line-height:29.3px;left:706px;">3</div><div class="t" style="top:2090.69px;font-size:29.3px;font-weight:400;color:#2e2e2e;line-height:29.3px;left:1652px;">Fusion Sales Or…</div><div class="t" style="top:2090.69px;font-size:29.3px;font-weight:400;color:#2e2e2e;line-height:29.3px;left:-1831px;width:4000px;text-align:right;">1</div><div class="t" style="top:2090.69px;font-size:29.3px;font-weight:400;color:#2e2e2e;line-height:29.3px;left:2197px;">1/20/21</div><div class="t" style="top:2090.69px;font-size:29.3px;font-weight:400;color:#2e2e2e;line-height:29.3px;left:-1284px;width:4000px;text-align:right;">3</div><div class="t" style="top:2090.69px;font-size:29.3px;font-weight:400;color:#2e2e2e;line-height:29.3px;left:-1011px;width:4000px;text-align:right;">40.00</div><div class="t" style="top:2090.69px;font-size:29.3px;font-weight:400;color:#2e2e2e;line-height:29.3px;left:-738px;width:4000px;text-align:right;">39.90</div><div class="t" style="top:2090.69px;font-size:29.3px;font-weight:400;color:#2e2e2e;line-height:29.3px;left:-465px;width:4000px;text-align:right;">119.70</div><div class="t" style="top:2090.69px;font-size:29.3px;font-weight:400;color:#2e2e2e;line-height:29.3px;left:80px;width:4000px;text-align:right;">0.25</div><div class="t" style="top:2090.69px;font-size:29.3px;font-weight:400;color:#2e2e2e;line-height:29.3px;left:4264px;">99.75</div><div class="t" style="top:2189.19px;font-size:29.3px;font-weight:400;color:#2e2e2e;line-height:29.3px;left:160px;">1/20/21</div><div class="t" style="top:2189.19px;font-size:29.3px;font-weight:400;color:#2e2e2e;line-height:29.3px;left:433px;">7001</div><div class="t" style="top:2189.19px;font-size:29.3px;font-weight:400;color:#2e2e2e;line-height:29.3px;left:706px;">3</div><div class="t" style="top:2189.19px;font-size:29.3px;font-weight:400;color:#2e2e2e;line-height:29.3px;left:978px;">12/10/20</div><div class="t" style="top:2189.19px;font-size:29.3px;font-weight:400;color:#2e2e2e;line-height:29.3px;left:1652px;">Fusion Sales Or…</div><div class="t" style="top:2189.19px;font-size:29.3px;font-weight:400;color:#2e2e2e;line-height:29.3px;left:-1831px;width:4000px;text-align:right;">2</div><div class="t" style="top:2189.19px;font-size:29.3px;font-weight:400;color:#2e2e2e;line-height:29.3px;left:2197px;">1/20/21</div><div class="t" style="top:2189.19px;font-size:29.3px;font-weight:400;color:#2e2e2e;line-height:29.3px;left:-1284px;width:4000px;text-align:right;">0</div><div class="t" style="top:2189.19px;font-size:29.3px;font-weight:400;color:#2e2e2e;line-height:29.3px;left:-1011px;width:4000px;text-align:right;">40.00</div><div class="t" style="top:2189.19px;font-size:29.3px;font-weight:400;color:#2e2e2e;line-height:29.3px;left:-738px;width:4000px;text-align:right;">0.00</div><div class="t" style="top:2189.19px;font-size:29.3px;font-weight:400;color:#2e2e2e;line-height:29.3px;left:-465px;width:4000px;text-align:right;">0.00</div></div><div class="b" style="left:1253px;top:2169px;width:370px;height:70px;border:2px solid #d8dee4;border-radius:3px;background:#fbfcfd;"></div><div class="t" style="top:2188.74px;font-size:30.3px;font-weight:400;color:#2e2e2e;line-height:30.3px;left:1267px;">Contract modification</div><svg class="b" style="left:1590px;top:2196px" width="24" height="18"><path d="M2.5 3 L12 12.5 L21.5 3" stroke="#2a2a2a" stroke-width="4.2" fill="none"/></svg><div class="b" style="left:830px;top:2282px;width:2720px;height:260px;border-radius:150px;background:rgba(0,0,0,0.14);filter:blur(50px);"></div>
</div></body></html>
